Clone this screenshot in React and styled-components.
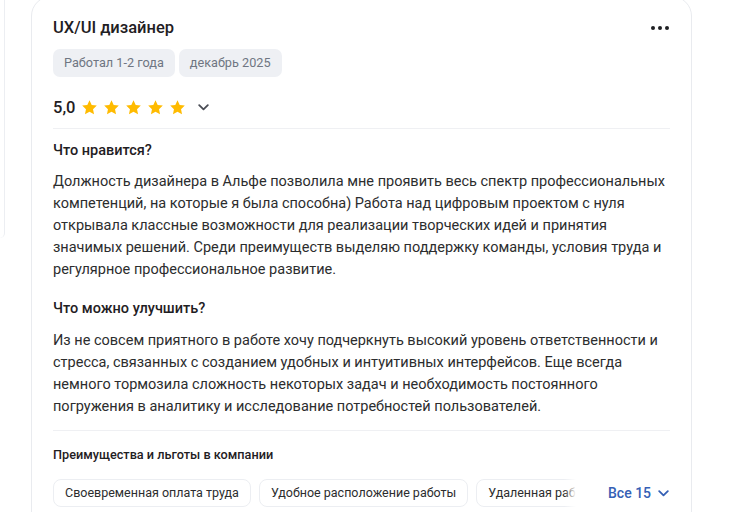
import React from 'react'
import styled, { createGlobalStyle } from 'styled-components'

const GlobalStyle = createGlobalStyle`
  body {
    margin: 0;
    background: #ffffff;
    font-family: Roboto, "Noto Sans", Arial, sans-serif;
    color: #2c2d2e;
  }
`

const Page = styled.div`
  display: flex;
  align-items: flex-start;
  gap: 26px;
  height: 512px;
  overflow: hidden;
`

const SideEdge = styled.div`
  width: 4px;
  height: 238px;
  border-right: 1px solid #eceef2;
  border-bottom-right-radius: 10px;
  flex-shrink: 0;
`

const Card = styled.article`
  width: 617px;
  margin-top: -4px;
  padding: 20px 21px 40px 21px;
  border: 1px solid #e9ebef;
  border-radius: 20px;
  background: #fff;
`

const Header = styled.div`
  display: flex;
  justify-content: space-between;
  align-items: center;
`

const Title = styled.h2`
  margin: 0;
  font-size: 16.5px;
  line-height: 22px;
  font-weight: 500;
  color: #1f2023;
`

const MoreButton = styled.button`
  display: flex;
  gap: 3px;
  padding: 0;
  margin-right: 1px;
  border: none;
  background: none;
  cursor: pointer;
`

const Dot = styled.span`
  width: 4px;
  height: 4px;
  border-radius: 50%;
  background: #1f2023;
`

const Tags = styled.div`
  display: flex;
  gap: 4px;
  margin-top: 10px;
`

const Tag = styled.span`
  height: 28px;
  line-height: 28px;
  padding: 0 11px;
  border-radius: 7px;
  background: #eef0f4;
  color: #6f7682;
  font-size: 12.7px;
`

const RatingRow = styled.div`
  display: flex;
  align-items: center;
  height: 24px;
  margin-top: 18px;
`

const Score = styled.span`
  font-size: 16.5px;
  font-weight: 500;
  color: #1f2023;
  margin-right: 6px;
`

const Stars = styled.div`
  display: flex;
  gap: 5px;
`

const Chevron = styled.svg`
  margin-left: ${(p) => p.$offset || 0}px;
  flex-shrink: 0;
`

const Divider = styled.hr`
  margin: ${(p) => p.$top}px 0 0;
  border: none;
  border-top: 1px solid #eff0f3;
`

const SectionTitle = styled.h3`
  margin: ${(p) => p.$top}px 0 0;
  font-size: ${(p) => p.$size || 14.5}px;
  line-height: ${(p) => (p.$small ? 18 : 22)}px;
  font-weight: 500;
  color: #1f2023;
`

const Text = styled.p`
  margin: ${(p) => p.$top}px 0 0;
  font-size: 14.5px;
  line-height: 22px;
  color: #2c2d2e;
`

const BenefitsRow = styled.div`
  display: flex;
  align-items: center;
  margin-top: 15px;
`

const ChipsViewport = styled.div`
  position: relative;
  width: 525px;
  flex-shrink: 0;
  overflow: hidden;

  &::after {
    content: '';
    position: absolute;
    top: 0;
    right: 0;
    bottom: 0;
    width: 14px;
    background: linear-gradient(to right, rgba(255, 255, 255, 0), #fff 85%);
  }
`

const Chips = styled.div`
  display: flex;
  gap: 8px;
  white-space: nowrap;
`

const Chip = styled.span`
  height: 26px;
  line-height: 26px;
  padding: 0 11px;
  border: 1px solid #eceef2;
  border-radius: 8px;
  font-size: 12.5px;
  color: #2c2d2e;
`

const AllButton = styled.button`
  display: flex;
  align-items: center;
  gap: 7px;
  margin-left: 30px;
  padding: 0;
  border: none;
  background: none;
  font-family: inherit;
  font-size: 14px;
  font-weight: 500;
  color: #3560b5;
  cursor: pointer;
`

const Star = () => (
  <svg width="17" height="17" viewBox="0 0 24 24">
    <path
      fill="#ffbb00"
      d="M12 1.8l3.1 6.6 7.2.9-5.3 5 1.4 7.1L12 17.9l-6.4 3.5L7 14.3l-5.3-5 7.2-.9z"
    />
  </svg>
)

const ChevronDown = ({ color = '#4a4d55', offset }) => (
  <Chevron $offset={offset} width="11" height="7" viewBox="0 0 11 7">
    <path d="M1.2 1.2L5.5 5.4l4.3-4.2" fill="none" stroke={color} strokeWidth="1.8" strokeLinecap="round" strokeLinejoin="round" />
  </Chevron>
)

const benefits = [
  'Своевременная оплата труда',
  'Удобное расположение работы',
  'Удаленная работа',
  'Гибкий график',
]

const App = () => {
  return (
    <Page>
      <GlobalStyle />
      <SideEdge />
      <Card>
        <Header>
          <Title>UX/UI дизайнер</Title>
          <MoreButton aria-label="Ещё">
            <Dot />
            <Dot />
            <Dot />
          </MoreButton>
        </Header>

        <Tags>
          <Tag>Работал 1-2 года</Tag>
          <Tag>декабрь 2025</Tag>
        </Tags>

        <RatingRow>
          <Score>5,0</Score>
          <Stars>
            {[0, 1, 2, 3, 4].map((i) => (
              <Star key={i} />
            ))}
          </Stars>
          <ChevronDown offset={12} />
        </RatingRow>

        <Divider $top={9} />

        <SectionTitle $top={11}>Что нравится?</SectionTitle>
        <Text $top={9}>
          Должность дизайнера в Альфе позволила мне проявить весь спектр профессиональных
          компетенций, на которые я была способна) Работа над цифровым проектом с нуля
          открывала классные возможности для реализации творческих идей и принятия
          значимых решений. Среди преимуществ выделяю поддержку команды, условия труда и
          регулярное профессиональное развитие.
        </Text>

        <SectionTitle $top={17}>Что можно улучшить?</SectionTitle>
        <Text $top={10}>
          Из не совсем приятного в работе хочу подчеркнуть высокий уровень ответственности и
          стресса, связанных с созданием удобных и интуитивных интерфейсов. Еще всегда
          немного тормозила сложность некоторых задач и необходимость постоянного
          погружения в аналитику и исследование потребностей пользователей.
        </Text>

        <Divider $top={12} />

        <SectionTitle $top={15} $size={12.7} $small>
          Преимущества и льготы в компании
        </SectionTitle>

        <BenefitsRow>
          <ChipsViewport>
            <Chips>
              {benefits.map((b) => (
                <Chip key={b}>{b}</Chip>
              ))}
            </Chips>
          </ChipsViewport>
          <AllButton>
            Все 15
            <ChevronDown color="#3560b5" />
          </AllButton>
        </BenefitsRow>
      </Card>
    </Page>
  )
}

export default App
